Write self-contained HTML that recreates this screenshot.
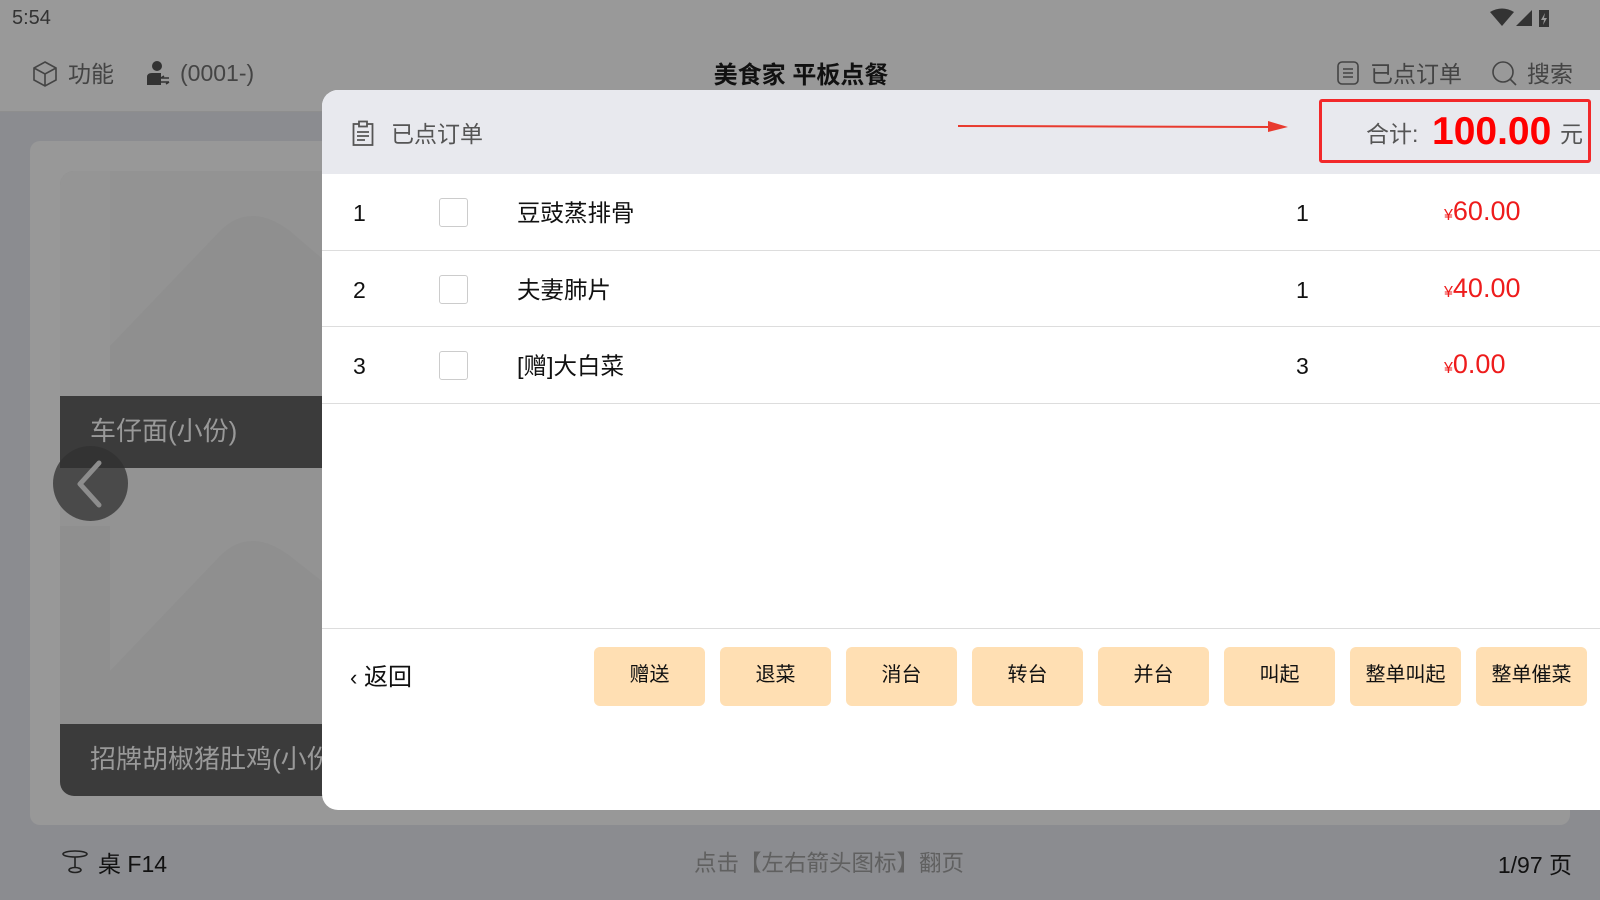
<!DOCTYPE html>
<html><head><meta charset="utf-8"><style>
*{margin:0;padding:0;box-sizing:border-box}
body{width:1600px;height:900px;overflow:hidden;position:relative;background:#8b8c90;font-family:"Liberation Sans","Noto Sans CJK SC",sans-serif;}
.abs{position:absolute}
.t{white-space:nowrap}
</style></head><body>
<!-- top -->
<div class="abs" style="left:0;top:0;width:1600px;height:112px;background:#999999;border-bottom:1px solid #8e8e8e"></div>
<div class="abs t" style="left:12px;top:7px;font-size:20px;color:#333">5:54</div>
<svg class="abs" style="left:1490px;top:8px" width="70" height="22" viewBox="0 0 70 22"><path d="M0 4 Q12 -3 24 4 L12 18Z" fill="#333"/><path d="M26 18 L42 2 L42 18Z" fill="#333"/><rect x="49" y="2" width="10" height="17" fill="#333"/><path d="M55 5 L51 12 L54 12 L53 17 L57 10 L54 10Z" fill="#999"/></svg>
<svg class="abs" style="left:33px;top:61px" width="24" height="26" viewBox="0 0 24 26"><path d="M12 1 L23 7 L23 19 L12 25 L1 19 L1 7Z M1 7 L12 13 L23 7 M12 13 L12 25" fill="none" stroke="#444" stroke-width="1.6"/></svg>
<div class="abs t" style="left:68px;top:55px;font-size:23px;color:#444">功能</div>
<svg class="abs" style="left:146px;top:60px" width="24" height="26" viewBox="0 0 24 26"><circle cx="11" cy="6" r="5" fill="#333"/><path d="M1 25 L1 17 Q1 13 6 13 L15 13 L15 25Z" fill="#333"/><path d="M15 18 L23 18 M18 16 L15 18 M15 22 L23 22 M20 24 L23 22" stroke="#333" stroke-width="1.6" fill="none"/></svg>
<div class="abs t" style="left:180px;top:60px;font-size:23px;color:#444">(0001-)</div>
<div class="abs t" style="left:0;width:1600px;text-align:center;top:55px;font-size:24px;font-weight:bold;color:#111;padding-left:2px">美食家 平板点餐</div>
<svg class="abs" style="left:1337px;top:61px" width="22" height="24" viewBox="0 0 22 24"><rect x="1" y="1" width="20" height="22" rx="4" fill="none" stroke="#444" stroke-width="1.6"/><path d="M6 8H16M6 12H16M6 16H16" stroke="#444" stroke-width="1.6"/></svg>
<div class="abs t" style="left:1370px;top:55px;font-size:23px;color:#444">已点订单</div>
<svg class="abs" style="left:1492px;top:61px" width="26" height="26" viewBox="0 0 26 26"><circle cx="11" cy="11" r="10" fill="none" stroke="#444" stroke-width="1.6"/><path d="M18 18L24 24" stroke="#444" stroke-width="1.6"/></svg>
<div class="abs t" style="left:1527px;top:55px;font-size:23px;color:#444">搜索</div>
<!-- card area -->
<div class="abs" style="left:30px;top:141px;width:1540px;height:684px;background:#989898;border-radius:10px"></div>
<div class="abs" style="left:60px;top:171px;width:300px;height:625px;background:#939393;border-radius:14px;overflow:hidden">
 <svg class="abs" style="left:0;top:0" width="300" height="625"><path d="M0 0 H50 V175 L160 60 Q190 30 230 60 L300 120 V225 H0Z" fill="#8f8f8f"/><path d="M50 355 V500 L160 385 Q190 355 230 385 L300 440 V553 H0 V355Z" fill="#8f8f8f"/><path d="M0 0 H50 V300 H0Z" fill="#959595"/></svg>
 <div class="abs" style="left:0;top:225px;width:300px;height:72px;background:#3b3b3b"></div>
 <div class="abs t" style="left:30px;top:240px;font-size:26px;color:#999">车仔面(小份)</div>
 <div class="abs" style="left:0;top:553px;width:300px;height:72px;background:#3b3b3b"></div>
 <div class="abs t" style="left:30px;top:568px;font-size:26px;color:#999">招牌胡椒猪肚鸡(小份)</div>
</div>
<div class="abs" style="left:53px;top:446px;width:75px;height:75px;border-radius:50%;background:rgba(50,50,50,.75)"></div>
<svg class="abs" style="left:74px;top:460px" width="30" height="48" viewBox="0 0 30 48"><path d="M25 3 L6 24 L25 45" fill="none" stroke="#8d8d8d" stroke-width="5" stroke-linecap="round" stroke-linejoin="round"/></svg>
<!-- bottom -->
<svg class="abs" style="left:61px;top:850px" width="28" height="24" viewBox="0 0 28 24"><ellipse cx="14" cy="4" rx="12" ry="3" fill="none" stroke="#222" stroke-width="1.6"/><path d="M14 7V18" stroke="#222" stroke-width="1.6"/><ellipse cx="14" cy="20" rx="6" ry="2.5" fill="none" stroke="#222" stroke-width="1.6"/></svg>
<div class="abs t" style="left:98px;top:845px;font-size:23px;color:#111">桌 F14</div>
<div class="abs t" style="left:0;width:1600px;text-align:center;top:846px;font-size:22.5px;color:#606060;padding-left:58px">点击【左右箭头图标】翻页</div>
<div class="abs t" style="right:28px;top:846px;font-size:23px;color:#111">1/97 页</div>
<!-- panel -->
<div class="abs" style="left:322px;top:90px;width:1290px;height:720px;background:#fff;border-radius:16px 0 0 16px;overflow:hidden">
 <div class="abs" style="left:0;top:0;width:1290px;height:84px;background:#e8e9ee"></div>
 <svg class="abs" style="left:30px;top:30px" width="22" height="26" viewBox="0 0 22 26"><rect x="1.5" y="4" width="19" height="21" fill="none" stroke="#555" stroke-width="1.8"/><rect x="7" y="1.5" width="8" height="5" fill="#e8e9ee" stroke="#555" stroke-width="1.8"/><path d="M5 12H17M5 16H17M5 20H13" stroke="#555" stroke-width="1.8"/></svg>
 <div class="abs t" style="left:69px;top:25px;font-size:23px;color:#555">已点订单</div>
 <svg class="abs" style="left:636px;top:29px" width="335" height="16"><path d="M0 7 L320 8" stroke="#e83a2e" stroke-width="2"/><path d="M310 2 L330 8 L310 13Z" fill="#e83a2e"/></svg>
 <div class="abs" style="left:997px;top:9px;width:272px;height:64px;border:3px solid #f2282a;border-radius:3px"></div>
 <div class="abs t" style="left:1044px;top:25px;font-size:23px;color:#555">合计:</div>
 <div class="abs t" style="left:1110px;top:20px;font-size:39px;font-weight:bold;color:#ff0000">100.00</div>
 <div class="abs t" style="left:1238px;top:25px;font-size:23px;color:#555">元</div>
 <!-- rows -->
 <div class="abs" style="left:0;top:160px;width:1290px;height:1px;background:#ddd"></div>
 <div class="abs" style="left:0;top:236px;width:1290px;height:1px;background:#ddd"></div>
 <div class="abs" style="left:0;top:313px;width:1290px;height:1px;background:#ddd"></div>
 <div class="abs" style="left:0;top:538px;width:1290px;height:1px;background:#ddd"></div>
 <div class="abs t" style="left:31px;top:110px;font-size:23px;color:#111">1</div>
 <div class="abs" style="left:117px;top:108px;width:29px;height:29px;border:1px solid #ccc;border-radius:3px"></div>
 <div class="abs t" style="left:195px;top:104px;font-size:23.5px;color:#111">豆豉蒸排骨</div>
 <div class="abs t" style="left:974px;top:110px;font-size:23px;color:#111">1</div>
 <div class="abs t" style="left:1122px;top:106px;font-size:27px;color:#ee1c1c"><span style="font-size:16px">¥</span>60.00</div>
 <div class="abs t" style="left:31px;top:187px;font-size:23px;color:#111">2</div>
 <div class="abs" style="left:117px;top:185px;width:29px;height:29px;border:1px solid #ccc;border-radius:3px"></div>
 <div class="abs t" style="left:195px;top:181px;font-size:23.5px;color:#111">夫妻肺片</div>
 <div class="abs t" style="left:974px;top:187px;font-size:23px;color:#111">1</div>
 <div class="abs t" style="left:1122px;top:183px;font-size:27px;color:#ee1c1c"><span style="font-size:16px">¥</span>40.00</div>
 <div class="abs t" style="left:31px;top:263px;font-size:23px;color:#111">3</div>
 <div class="abs" style="left:117px;top:261px;width:29px;height:29px;border:1px solid #ccc;border-radius:3px"></div>
 <div class="abs t" style="left:195px;top:257px;font-size:23.5px;color:#111">[赠]大白菜</div>
 <div class="abs t" style="left:974px;top:263px;font-size:23px;color:#111">3</div>
 <div class="abs t" style="left:1122px;top:259px;font-size:27px;color:#ee1c1c"><span style="font-size:16px">¥</span>0.00</div>
 <!-- footer -->
 <div class="abs t" style="left:28px;top:567px;font-size:24px;color:#111"><span style="font-size:22px">‹</span> 返回</div>
 <div class="abs" style="left:272px;top:557px;font-size:20px;color:#111">
  <div style="display:flex;gap:15px;line-height:1">
   <div style="width:111px;height:59px;background:#ffdfb3;border-radius:6px;display:flex;align-items:center;justify-content:center;padding-bottom:3px">赠送</div>
   <div style="width:111px;height:59px;background:#ffdfb3;border-radius:6px;display:flex;align-items:center;justify-content:center;padding-bottom:3px">退菜</div>
   <div style="width:111px;height:59px;background:#ffdfb3;border-radius:6px;display:flex;align-items:center;justify-content:center;padding-bottom:3px">消台</div>
   <div style="width:111px;height:59px;background:#ffdfb3;border-radius:6px;display:flex;align-items:center;justify-content:center;padding-bottom:3px">转台</div>
   <div style="width:111px;height:59px;background:#ffdfb3;border-radius:6px;display:flex;align-items:center;justify-content:center;padding-bottom:3px">并台</div>
   <div style="width:111px;height:59px;background:#ffdfb3;border-radius:6px;display:flex;align-items:center;justify-content:center;padding-bottom:3px">叫起</div>
   <div style="width:111px;height:59px;background:#ffdfb3;border-radius:6px;display:flex;align-items:center;justify-content:center;padding-bottom:3px">整单叫起</div>
   <div style="width:111px;height:59px;background:#ffdfb3;border-radius:6px;display:flex;align-items:center;justify-content:center;padding-bottom:3px">整单催菜</div>
  </div>
 </div>
</div>
</body></html>
